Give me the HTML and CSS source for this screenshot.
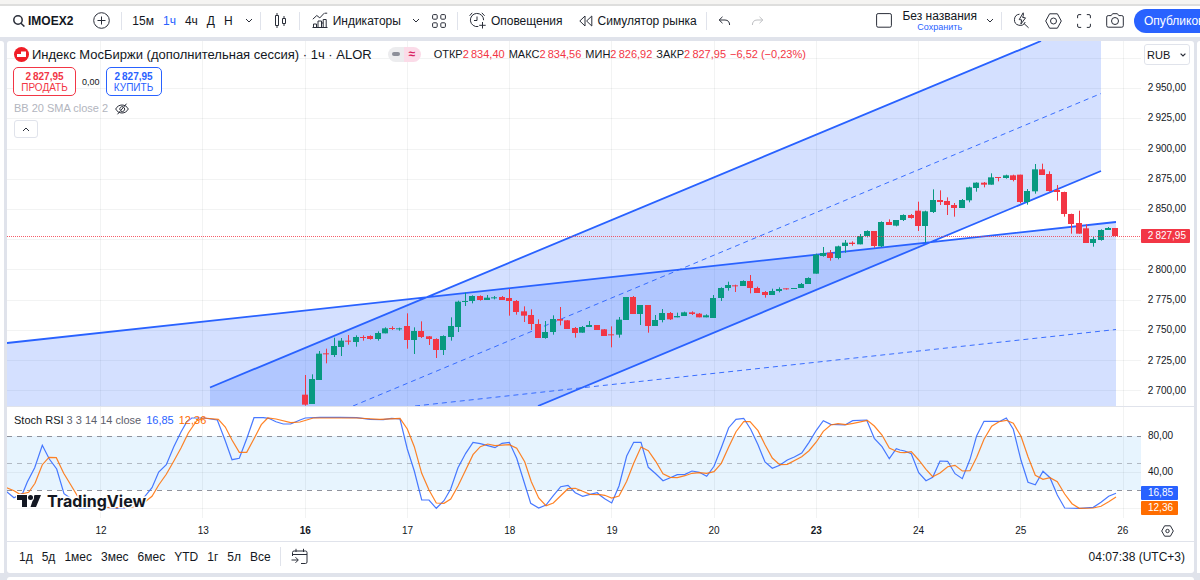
FILE: index.html
```html
<!DOCTYPE html>
<html lang="ru">
<head>
<meta charset="utf-8">
<title>IMOEX2</title>
<meta name="viewport" content="width=device-width, initial-scale=1">
<link rel="stylesheet" href="styles.css">
</head>
<body>
<div class="app">
  <div class="top-strip"></div>
  <header class="toolbar">
    <button class="tool symbol"><svg width="12" height="13" viewBox="0 0 12 13"><circle cx="5" cy="6" r="4.2" stroke-width="1.5"/><path d="M8 9.2l3.4 3.3" stroke-width="1.5"/></svg>IMOEX2</button>
    <button class="tool add" aria-label="Добавить"><svg width="17" height="17" viewBox="0 0 17 17"><circle cx="8.5" cy="8.5" r="7.8"/><path d="M8.5 4.5v8M4.5 8.5h8"/></svg></button>
    <span class="divider"></span>
    <nav class="intervals">
      <button class="tool">15м</button>
      <button class="tool active">1ч</button>
      <button class="tool">4ч</button>
      <button class="tool">Д</button>
      <button class="tool">Н</button>
      <button class="tool interval-menu" aria-label="Интервалы"><svg width="8" height="5" viewBox="0 0 8 5"><path d="M1 1l3 3 3-3"/></svg></button>
    </nav>
    <span class="divider tight"></span>
    <button class="tool chart-type" aria-label="Свечи"><svg width="13" height="17" viewBox="0 0 13 17"><path d="M1.5 3.5h3v10h-3zM3 1v2.500M3 13.500V16M8.500 6.500h3v5h-3zM10 4v2.500M10 11.500V14"/></svg></button>
    <span class="divider"></span>
    <button class="tool labelled"><svg width="16" height="17" viewBox="0 0 16 17"><path d="M.8 7.200l4-3.700 3 2.400 4.400-4.700M12.600 1.200h2.600M1.500 15.500v-3.500h3v3.500M6 15.500V9h3.500v6.500M9.500 11h1.700M11.200 15.500V7.500h3v8M.5 15.500h15"/></svg>Индикаторы</button>
    <button class="tool more" aria-label="Ещё"><svg width="8" height="5" viewBox="0 0 8 5"><path d="M1 1l3 3 3-3"/></svg></button>
    <button class="tool templates" aria-label="Шаблоны"><svg width="14" height="14" viewBox="0 0 14 14"><rect x=".6" y=".6" width="4.600" height="4.600" rx="1"/><rect x="8.800" y=".6" width="4.600" height="4.600" rx="1"/><rect x=".6" y="8.800" width="4.600" height="4.600" rx="1"/><rect x="8.800" y="8.800" width="4.600" height="4.600" rx="1"/></svg></button>
    <span class="divider"></span>
    <button class="tool labelled"><svg width="17" height="17" viewBox="0 0 17 17"><path d="M14.600 8.200A6.600 6.600 0 1 0 9.300 14.500M8 4.500v4H5M.6 3.800L3.200.8M12.800.8l2.800 3M13.500 10v6.500M10.200 13.300h6.500"/></svg>Оповещения</button>
    <button class="tool labelled replay"><svg width="14" height="12" viewBox="0 0 14 12"><path d="M6 1v10L.8 6zM12.800 1v10L7.600 6z" stroke-linejoin="round"/></svg>Симулятор рынка</button>
    <span class="divider"></span>
    <button class="tool" aria-label="Отменить"><svg width="13" height="10" viewBox="0 0 13 10"><path d="M4.500.8L1.200 4l3.300 3.200M1.200 4H7c3 0 4.600 2 4.600 5"/></svg></button>
    <button class="tool redo" aria-label="Повторить"><svg width="13" height="10" viewBox="0 0 13 10"><path d="M8.500.8L11.800 4 8.500 7.200M11.800 4H6C3 4 1.400 6 1.400 9"/></svg></button>
    <div class="toolbar-right">
      <button class="tool" aria-label="Макет"><svg width="16" height="15" viewBox="0 0 16 15"><rect x=".6" y=".6" width="14.800" height="13.600" rx="1.500"/></svg></button>
      <button class="tool layout-name"><span>Без названия</span><span class="save">Сохранить</span></button>
      <button class="tool name-menu" aria-label="Меню макета"><svg width="8" height="5" viewBox="0 0 8 5"><path d="M1 1l3 3 3-3"/></svg></button>
      <span class="divider"></span>
      <button class="tool" aria-label="Быстрый поиск"><svg width="17" height="17" viewBox="0 0 17 17"><path d="M6.500 2.200A5.600 5.600 0 1 0 12.200 10M11 11.500l4.600 4.300M10.200.8L6.200 7.600l2.500.3-.8 4.200 4.600-6.200-2.900-.5.800-2z" stroke-linejoin="round"/></svg></button>
      <button class="tool" aria-label="Настройки"><svg width="17" height="16" viewBox="0 0 17 16"><path d="M4.600.8h7.800L16.300 8l-3.900 7.200H4.600L.7 8z" stroke-linejoin="round"/><circle cx="8.500" cy="8" r="3"/></svg></button>
      <button class="tool" aria-label="Во весь экран"><svg width="14" height="14" viewBox="0 0 14 14"><path d="M.6 4.200V2A1.400 1.400 0 0 1 2 .6h2.200M9.800.6H12A1.400 1.400 0 0 1 13.400 2v2.200M13.400 9.800V12a1.400 1.400 0 0 1-1.400 1.400H9.800M4.200 13.400H2A1.400 1.400 0 0 1 .6 12V9.800"/></svg></button>
      <button class="tool" aria-label="Снимок"><svg width="18" height="15" viewBox="0 0 18 15"><path d="M2.200 2.600h3L6.600.7h4.800l1.400 1.900h3a1.500 1.500 0 0 1 1.500 1.500v8.600a1.500 1.500 0 0 1-1.500 1.500H2.200a1.500 1.500 0 0 1-1.500-1.500V4.100a1.500 1.500 0 0 1 1.500-1.500z"/><circle cx="9" cy="8" r="3.500"/></svg></button>
      <button class="publish">Опубликовать</button>
    </div>
  </header>

  <div class="workspace">
    <aside class="side left"></aside>
    <main class="panel">
      <section class="pane price-pane">
        <div class="plot">
          <svg class="chart" id="price" viewBox="7 41 1134 365" preserveAspectRatio="none">
            <g class="grid"></g>
            <path class="channel" d="M7 343L1116 222V406H7z"/>
            <path class="channel" d="M210 387.500L1041 41H1101V171L538 406H210z"/>
            <path class="trend" d="M7 343L1116 222M210 387.500L1041 41M538 406L1101 171"/>
            <path class="trend middle" d="M353 406L1101 93.500M415 406L1116 329.500"/>
            <g id="candles"></g>
            <g id="last-price" class="down last-price"></g>
          </svg>
          <div class="legend">
            <div class="title-row">
              <svg class="flag" width="15" height="15" viewBox="0 0 15 15"><circle cx="7.500" cy="7.500" r="7.500"/><path d="M3 7h4V4.500h5V10H3z"/></svg>
              <h1>Индекс МосБиржи (дополнительная сессия) · 1ч · ALOR</h1>
              <span class="badges"><span class="badge-closed"><i></i></span><span class="badge-approx">≈</span></span>
              <dl class="ohlc">
                <div><dt>ОТКР</dt><dd>2&#8201;834,40</dd></div>
                <div><dt>МАКС</dt><dd>2&#8201;834,56</dd></div>
                <div><dt>МИН</dt><dd>2&#8201;826,92</dd></div>
                <div><dt>ЗАКР</dt><dd>2&#8201;827,95</dd></div>
                <div><dd>−6,52 (−0,23%)</dd></div>
              </dl>
            </div>
            <div class="order-row">
              <button class="order sell"><b>2&#8201;827,95</b><span>ПРОДАТЬ</span></button>
              <span class="spread">0,00</span>
              <button class="order buy"><b>2&#8201;827,95</b><span>КУПИТЬ</span></button>
            </div>
            <div class="study-row">BB 20 SMA close 2
              <svg width="14" height="12" viewBox="0 0 14 12"><path d="M.7 6C2 3.500 4.300 2 7 2s5 1.500 6.300 4C12 8.500 9.700 10 7 10S2 8.500.7 6zM2.500 11.300L11.500.7M9 4.500A2.400 2.400 0 0 1 6 8.200M5 7A2.400 2.400 0 0 1 8 3.800"/></svg>
            </div>
            <button class="collapse" aria-label="Свернуть"><svg width="8" height="5" viewBox="0 0 8 5"><path d="M1 4l3-3 3 3"/></svg></button>
          </div>
        </div>
        <div class="scale">
          <div class="currency">
            <select aria-label="Валюта"><option>RUB</option></select>
            <svg width="6" height="4" viewBox="0 0 6 4"><path d="M.6.6L3 3 5.400.6"/></svg>
          </div>
          <ul class="prices">
            <li>2&#8201;950,00</li><li>2&#8201;925,00</li><li>2&#8201;900,00</li><li>2&#8201;875,00</li><li>2&#8201;850,00</li><li></li><li>2&#8201;800,00</li><li>2&#8201;775,00</li><li>2&#8201;750,00</li><li>2&#8201;725,00</li><li>2&#8201;700,00</li>
          </ul>
          <span class="price-tag">2&#8201;827,95</span>
        </div>
      </section>

      <section class="pane stoch-pane">
        <div class="plot">
          <svg class="chart" id="stoch" viewBox="7 407 1134 111" preserveAspectRatio="none">
            <path class="band" d="M7 436H1141V490H7z"/>
            <g class="grid"></g>
            <path class="level" d="M7 436.500H1141M7 490.500H1141"/>
            <path class="level mid" d="M7 463.500H1141"/>
            <polyline class="k" id="line-k"/>
            <polyline class="d" id="line-d"/>
          </svg>
          <div class="study-legend"><span>Stoch RSI <span class="params">3 3 14 14 close</span></span><span class="value-k">16,85</span><span class="value-d">12,36</span></div>
          <a class="brand" href="#"><svg width="27" height="14" viewBox="0 0 27 14"><path d="M1 1h10v12H6V6H1zM18.500 1h6.500l-5 12h-5.500z"/><circle cx="14.500" cy="3.500" r="2.500"/></svg>TradingView</a>
        </div>
        <div class="scale stoch-scale">
          <span class="level-label">80,00</span>
          <span class="level-label">40,00</span>
          <span class="tag tag-k">16,85</span>
          <span class="tag tag-d">12,36</span>
        </div>
      </section>

      <div class="time-axis">
        <ul class="days"><li>12</li><li>13</li><li class="strong">16</li><li>17</li><li>18</li><li>19</li><li>20</li><li class="strong">23</li><li>24</li><li>25</li><li>26</li></ul>
        <button class="axis-settings" aria-label="Настройки шкалы"><svg width="13" height="12" viewBox="0 0 13 12"><path d="M3.600.8h5.800L12.300 6l-2.900 5.200H3.600L.7 6z" stroke-linejoin="round"/><circle cx="6.500" cy="6" r="1.700"/></svg></button>
      </div>

      <footer class="ranges">
        <button>1д</button><button>5д</button><button>1мес</button><button>3мес</button><button>6мес</button><button>YTD</button><button>1г</button><button>5л</button><button>Все</button>
        <span class="range-divider"></span>
        <button class="goto" aria-label="Перейти к дате"><svg width="17" height="17" viewBox="0 0 17 17"><path d="M1.500 8V4.500A1.500 1.500 0 0 1 3 3h11.500A1.500 1.500 0 0 1 16 4.500V14a1.500 1.500 0 0 1-1.500 1.500H10M1.500 6.500H16M5 .8V4M12.500.8V4M.5 12H7M4.500 9.200L7.300 12l-2.800 2.800"/></svg></button>
        <time class="clock">04:07:38 (UTC+3)</time>
      </footer>
    </main>
    <aside class="side right"></aside>
  </div>
  <div class="bottom-strip"></div>
</div>
<script src="chart.js"></script>
</body>
</html>
```

FILE: styles.css
```css
* { box-sizing: border-box; }
body {
  margin: 0;
  font-family: "Liberation Sans", Arial, sans-serif;
  font-size: 12px;
  color: #131722;
}
button { font: inherit; color: inherit; background: none; border: 0; padding: 0; cursor: pointer; }
svg { display: block; flex: none; fill: none; stroke: #2a2e39; stroke-width: 1; }
ul, dl, dd, h1 { margin: 0; padding: 0; list-style: none; }

.app { display: flex; flex-direction: column; min-height: 100vh; background: #e0e3eb; overflow: hidden; }
.top-strip { height: 6px; background: #f5f4f2; border-bottom: 2px solid #dededd; }
.bottom-strip { height: 3px; margin: 4px 6px 0 7px; background: #fff; border-radius: 3px 3px 0 0; }

/* toolbar */
.toolbar { display: flex; align-items: center; height: 31px; padding: 0 0 2px 13px; background: #fff; white-space: nowrap; }
.tool { display: flex; align-items: center; flex: none; }
.symbol { gap: 3px; font-weight: bold; }
.add { margin-left: 20px; }
.divider { flex: none; width: 1px; height: 18px; margin: 0 11px; background: #e0e3eb; }
.add + .divider { margin-right: 10px; }
.divider.tight { margin: 0 13px 0 7px; }
.chart-type + .divider { margin: 0 12px; }
.intervals { display: flex; align-items: center; gap: 9px; }
.interval-menu { margin-left: 3px; }
.active { color: #2962ff; }
.labelled { gap: 5px; }
.more { margin-left: 11px; }
.templates { margin-left: 12px; }
.replay { margin-left: 16px; }
.replay + .divider { margin-left: 9px; }
.redo { margin-left: 20px; opacity: .3; }
.toolbar-right { display: flex; align-items: center; margin-left: auto; gap: 15px; }
.toolbar-right .divider { margin: 0 -4px 0 -8px; }
.layout-name { flex-direction: column; margin-left: -5px; line-height: 12px; }
.save { font-size: 9px; line-height: 10px; color: #2962ff; }
.name-menu { margin-left: -6px; }
.publish {
  width: 66px; height: 24px; margin-left: -5px; padding-left: 10px;
  overflow: hidden; text-align: left; color: #fff; background: #2962ff; border-radius: 12px 0 0 12px;
}

/* workspace */
.workspace { flex: 1; display: grid; grid-template-columns: 3px 1fr 3px; gap: 0 3px; margin-top: 4px; }
.side { background: #fff; }
.left { border-radius: 0 3px 0 0; margin-right: -1px; }
.right { border-radius: 3px 0 0 0; }
.panel { display: flex; flex-direction: column; min-width: 0; margin-left: 1px; background: #fff; border-radius: 3px; overflow: hidden; }
.pane { display: grid; grid-template-columns: 1fr 53px; }
.price-pane { flex: 365 1 auto; border-bottom: 1px solid #e0e3eb; }
.stoch-pane { flex: none; height: 111px; }
.plot { position: relative; }
.chart { position: absolute; inset: 0; width: 100%; height: 100%; }
.grid { stroke: #2a2e39; stroke-opacity: .06; }
.channel { fill: #2962ff; fill-opacity: .2; stroke: none; }
.trend { stroke: #2962ff; stroke-width: 1.8; }
.middle { stroke-width: 1; stroke-opacity: .9; stroke-dasharray: 5 4; }
.up { fill: #089981; stroke: none; }
.down { fill: #f23645; stroke: none; }
.last-price { fill-opacity: .8; }
.band { fill: #e7f4fe; stroke: none; }
.level { stroke: #8f929c; stroke-dasharray: 5 5; }
.mid { stroke-opacity: .6; }
.k { stroke: #2962ff; stroke-width: 1.2; stroke-opacity: .85; }
.d { stroke: #ff6d00; stroke-width: 1.2; stroke-opacity: .85; }

/* legend */
.legend { position: relative; padding: 4px 7px; }
.title-row { display: flex; align-items: center; height: 18px; gap: 3px; white-space: nowrap; }
.flag { stroke: none; fill: #f01d26; }
.flag path { fill: #fff; }
h1 { font-size: 13px; font-weight: normal; }
.badges { display: flex; margin-left: 13px; }
.badges span { display: flex; align-items: center; justify-content: center; width: 16px; height: 15px; }
.badges .badge-closed { background: #ececee; border-radius: 8px 0 0 8px; }
.badge-closed i { width: 8px; height: 4px; border-radius: 2px; background: #8c8f99; }
.badges .badge-approx { width: 17px; background: #fbdbe8; border-radius: 0 8px 8px 0; color: #d81b60; font-weight: bold; }
.ohlc { display: flex; gap: 4px; margin-left: 10px; font-size: 11px; }
.ohlc div { display: flex; }
.ohlc dd { color: #f23645; }
.order-row { display: flex; align-items: center; gap: 6px; margin: 4px 0 0 -1px; }
.order { display: flex; flex-direction: column; align-items: center; justify-content: center; height: 29px; font-size: 10px; line-height: 11px; border: 1px solid; border-radius: 5px; background: #fff; }
.sell { width: 63px; color: #f23645; }
.buy { width: 56px; color: #2962ff; }
.spread { font-size: 9px; }
.study-row { display: flex; align-items: center; gap: 7px; margin-top: 6px; font-size: 11px; line-height: 13px; color: #b2b5be; }
.collapse { display: flex; align-items: center; justify-content: center; width: 24px; height: 18px; margin-top: 5px; border: 1px solid #e0e3eb; border-radius: 3px; background: #fff; }

/* scales */
.scale { position: relative; display: flex; flex-direction: column; font-size: 10px; line-height: 14px; }
.currency { display: flex; align-items: center; margin: 3px 4px 0 3px; }
.currency select { width: 100%; height: 21px; padding: 0 2px; font: inherit; font-size: 11px; color: inherit; background: #fff; border: 1px solid #e0e3eb; border-radius: 3px; appearance: none; }
.currency svg { margin-left: -10px; stroke-width: 1.2; pointer-events: none; }
.prices { flex: 1; display: flex; flex-direction: column; justify-content: space-between; margin-top: 16px; padding: 0 8px 8px 0; text-align: right; }
.prices li { height: 14px; }
.price-tag { position: absolute; top: 188px; left: 0; right: 4px; padding-right: 4px; text-align: right; color: #fff; background: #f23645; border-radius: 1px; }
.stoch-scale { align-items: flex-start; gap: 1px; padding-top: 22px; }
.level-label { margin: 0 0 21px 7px; }
.stoch-scale .level-label + .level-label { margin-bottom: 6px; }
.tag { width: 37px; padding-left: 7px; color: #fff; border-radius: 1px; }
.tag-k { background: #2962ff; }
.tag-d { background: #ff6d00; }

.study-legend { position: relative; display: flex; gap: 5px; padding: 7px; font-size: 11px; line-height: 13px; }
.params { color: #5d606b; }
.value-k { color: #2962ff; }
.value-d { color: #ff6d00; }
.brand { position: absolute; left: 9px; bottom: 6px; display: flex; align-items: center; gap: 4px; font-family: Inter, sans-serif; font-size: 16px; line-height: 22px; font-weight: 700; color: #131722; text-decoration: none; -webkit-text-stroke: 3px #fff; paint-order: stroke fill; }
.brand svg { fill: #131722; stroke: #fff; stroke-width: 2; paint-order: stroke; overflow: visible; }

.time-axis { display: flex; align-items: center; height: 23px; padding: 2px 20px 0 86px; font-size: 10px; }
.days { flex: 1; display: flex; justify-content: space-between; }
.days li { width: 16px; text-align: center; }
.strong { font-weight: bold; }
.axis-settings { margin-left: 30px; }

.ranges { display: flex; align-items: center; gap: 9px; height: 32px; padding: 0 9px 2px 12px; border-top: 1px solid #e0e3eb; }
.range-divider { width: 1px; height: 19px; background: #e0e3eb; margin: 0 1px 0 0; }
.clock { margin-left: auto; }
```

FILE: chart.js
```js
const NS = "http://www.w3.org/2000/svg";
const FIRST_X = 305, STEP = 7.303, DAY = 102.25;

// One group per run of bars: [origin y, bars], each bar: direction, high, body top, body bottom, low in thirds of a unit.
const runs = [
  [260, `r345,404,434,437 g343,357,432,432 g273,281,360,360 r266,280,283,310 g233,258,285,291 g234,242,261,288
   r225,242,245,254 g226,231,246,260 r226,231,234,242 r226,228,237,239 g214,219,237,242 g202,205,220,220
   r199,204,207,210 g203,205,207,212 r160,198,240,266 g202,213,240,282 r184,213,231,234 r228,229,237,255
   r235,237,270,294 g226,228,270,285 g172,198,231,242 g122,125,201,216 g98,123,126,138 g106,108,123,130
   r106,108,120,122 g105,113,120,120 g108,112,114,118 r108,111,120,120 r87,114,123,167 r120,123,156,164
   r139,154,167,186`],
  [230, `r238,255,282,300 r268,282,324,324 g273,306,324,326 g256,267,306,314 r231,267,272,286 r270,271,297,297
   r291,294,309,323 g288,291,308,308 g273,285,291,291 r285,285,300,300 r297,298,318,318 r289,313,315,352
   g261,269,314,323 g201,201,270,270 r198,201,252,252 g225,225,252,285 r225,225,288,308 g255,270,288,288
   g237,249,270,277 r246,249,268,270 g248,258,262,262 g245,247,258,258 r244,247,252,255 r249,251,262,262
   g253,256,262,262 g195,204,264,264 g172,174,204,213 g155,165,174,182 r164,166,168,186 g151,153,168,168
   r135,153,174,190 r170,174,189,189 r183,186,195,203 g176,183,195,195 g172,177,183,187 r175,175,177,179
   g174,174,177,177 g159,162,174,174 g142,144,162,162`],
  [150, `g311,314,371,371 g291,309,318,320 r300,308,324,332 g287,289,324,328 g270,278,288,308 r274,278,282,287
   g252,258,283,283 g241,243,258,262 r243,243,288,293 g214,216,289,291 r208,216,225,225 g210,210,227,229
   g193,195,210,213 r192,195,204,206 r155,182,228,243 g182,184,228,278 g118,150,186,189 r121,150,156,165
   r142,153,165,195 r159,165,174,200 g147,150,174,174 g110,112,151,157 g97,98,114,125 r96,98,104,112
   g70,82,104,104 r81,81,84,94 g74,76,84,86 r74,76,90,94 r74,74,156,160 g117,123,156,164 g42,58,124,131
   r41,58,75,75 r64,72,123,125 r105,120,126,152 r125,126,192,200 r191,192,222,251 r182,219,251,251
   r223,235,279,279 g261,267,279,290 g238,240,270,272 g231,234,240,240 r234,234,258,260`]
];

function rect(parent, cls, x, y, w, h) {
  const r = document.createElementNS(NS, "rect");
  r.setAttribute("class", cls);
  r.setAttribute("x", x); r.setAttribute("y", y);
  r.setAttribute("width", w); r.setAttribute("height", Math.max(h, 1));
  parent.appendChild(r);
}

let index = 0;
const candles = document.getElementById("candles");
for (const [origin, text] of runs) {
  for (const bar of text.trim().split(/\s+/)) {
    const cls = bar[0] === "g" ? "up" : "down";
    const [high, top, bottom, low] = bar.slice(1).split(",").map(v => origin + v / 3);
    const x = Math.round(FIRST_X + STEP * index - 0.5);
    rect(candles, cls, x, high, 1, low - high);
    rect(candles, cls, x - 3, top, 6, bottom - top);
    index++;
  }
}

// Dotted line at the last price, one path of unit squares.
const dots = document.createElementNS(NS, "path");
let squares = "";
for (let x = 7; x < 1141; x += 2) squares += `M${x} 236h1v1h-1z`;
dots.setAttribute("d", squares);
document.getElementById("last-price").appendChild(dots);

function grid(id, top, bottom, rows) {
  let d = "";
  for (let i = 0; i < 11; i++) d += `M${Math.round(100 + DAY * i) + 0.5} ${top}V${bottom}`;
  for (const y of rows) d += `M7 ${Math.round(y) + 0.5}H1141`;
  const p = document.createElementNS(NS, "path");
  p.setAttribute("d", d);
  document.querySelector(`#${id} .grid`).appendChild(p);
}
grid("price", 41, 406, Array.from({ length: 12 }, (_, i) => 58 + 30.2 * i));
grid("stoch", 407, 518, [472, 508]);

// Oscillator points, grouped by 300-unit-wide window: x,y pairs in thirds from the window's left edge.
const k = [
  [0, "20,275 42,293 68,280 82,246 104,203 127,136 148,177 170,207 192,281 214,296 236,325 262,325 300,318 340,325 370,325 410,310 434,290 456,263 476,216 499,194 521,141 543,96 560,66 575,54 612,54 652,60 674,118 696,179 718,175 740,116 762,53 790,53 806,55 828,65 850,72 872,72"],
  [300, "0,60 16,54 60,52 120,52 170,53 210,58 250,59 275,55 300,57 322,147 343,213 365,300 387,300 409,325 432,302 452,267 474,203 497,160 519,127 541,131 563,137 585,143 606,130 628,127 650,175 672,245 692,310 716,324 738,315 760,287 782,260 804,256 826,278 848,289 870,283 892,278"],
  [600, "0,286 14,296 35,309 57,258 80,168 101,127 123,127 145,202 167,221 189,242 211,233 232,224 255,223 276,213 298,217 320,229 342,199 364,143 386,83 408,58 431,55 452,88 474,134 495,186 517,205 539,196 562,180 583,171 605,159 627,127 649,91 670,62 692,73 735,75 758,62 800,60 823,115 846,140 868,176 889,146"],
  [900, "0,150 14,153 34,161 56,218 78,242 98,232 120,183 143,184 165,221 187,236 210,178 230,107 252,64 300,64 319,54 340,88 363,181 384,247 406,254 429,214 450,233 472,285 494,324 540,325 580,322 603,307 626,289 648,280"]
];
const d = [
  [0, "20,263 42,272 60,283 86,277 105,250 127,194 147,172 169,173 191,220 213,256 236,294 262,316 300,322 350,323 400,321 430,310 456,289 476,255 499,223 521,184 543,144 565,99 590,62 612,54 655,58 676,81 696,120 718,157 740,157 762,116 784,74 803,54 828,57 872,68"],
  [300, "0,66 20,60 40,54 80,54 170,54 240,58 300,55 322,87 343,140 365,220 387,270 409,309 432,310 452,297 474,258 497,210 519,164 541,140 563,132 585,137 628,134 650,145 674,185 694,245 716,294 738,317 760,309 782,287 804,266 826,265 848,274 870,283"],
  [600, "0,284 14,286 35,294 57,288 80,244 101,190 123,141 145,152 167,184 189,221 211,232 232,233 255,227 276,220 298,218 320,220 342,215 364,190 386,141 408,95 431,65 450,65 474,92 495,134 517,174 539,194 562,193 605,170 627,152 649,126 670,94 692,75 714,71 738,74 760,70 802,61 823,78 846,105 868,144 889,154"],
  [900, "0,157 14,158 34,155 56,180 78,208 98,230 120,219 143,200 165,196 187,213 210,212 230,172 252,118 275,79 297,65 319,61 340,70 363,109 384,170 406,226 429,238 450,233 472,245 494,282 516,311 538,325 580,324 603,319 626,305 648,291"]
];
function line(id, windows) {
  const points = windows.flatMap(([left, text]) => text.split(" ").map(pair => {
    const [x, y] = pair.split(",").map(Number);
    return `${(left + x / 3).toFixed(1)},${(400 + y / 3).toFixed(1)}`;
  }));
  document.getElementById(id).setAttribute("points", points.join(" "));
}
line("line-k", k);
line("line-d", d);
```
